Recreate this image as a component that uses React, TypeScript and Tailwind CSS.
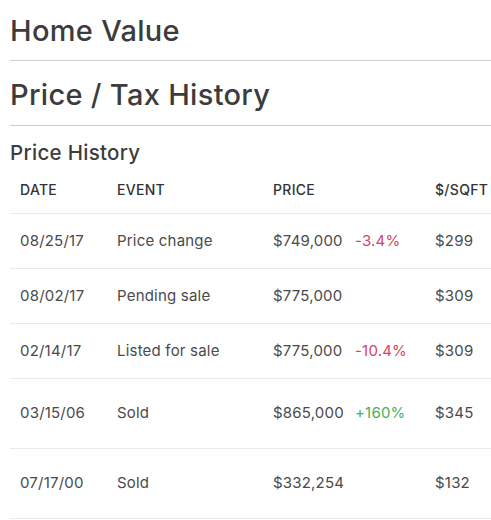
const rows = [
  { date: '08/25/17', event: 'Price change', price: '$749,000', change: '-3.4%', up: false, sqft: '$299', tall: false },
  { date: '08/02/17', event: 'Pending sale', price: '$775,000', change: '', up: false, sqft: '$309', tall: false },
  { date: '02/14/17', event: 'Listed for sale', price: '$775,000', change: '-10.4%', up: false, sqft: '$309', tall: false },
  { date: '03/15/06', event: 'Sold', price: '$865,000', change: '+160%', up: true, sqft: '$345', tall: true },
  { date: '07/17/00', event: 'Sold', price: '$332,254', change: '', up: false, sqft: '$132', tall: true },
];

const cols = 'grid grid-cols-[97px_156px_82px_80px_1fr] items-center pl-[10px]';

export default function App() {
  return (
    <div className="min-h-screen bg-white pl-[10px] text-[#444]" style={{ fontFamily: 'Inter, sans-serif' }}>
      <h2 className="h-[61px] flex items-center border-b border-[#cfcfcf] text-[29px] tracking-[0.3px] text-[#3c3c3c] font-medium pt-[2px]">
        Home Value
      </h2>
      <h2 className="h-[65px] flex items-center border-b border-[#cfcfcf] text-[29px] tracking-[0.3px] text-[#3c3c3c] font-medium pt-[4px]">
        Price / Tax History
      </h2>
      <h3 className="pt-[14px] text-[20.5px] tracking-[0.3px] font-medium text-[#3c3c3c] leading-[26px]">Price History</h3>

      {/* header */}
      <div className={`${cols} h-[48px] !items-end pb-[14px] border-b border-[#ebebeb] text-[14px] tracking-[0.3px] leading-[18px] font-medium text-[#333]`}>
        <span>DATE</span>
        <span>EVENT</span>
        <span>PRICE</span>
        <span />
        <span>$/SQFT</span>
      </div>

      {rows.map((r, i) => (
        <div
          key={i}
          className={`${cols} ${r.tall ? 'h-[70px]' : 'h-[55px]'} border-b border-[#ebebeb] text-[15px] tracking-[0.2px] text-[#4a4a4a]`}
        >
          <span>{r.date}</span>
          <span>{r.event}</span>
          <span>{r.price}</span>
          <span className={r.up ? 'text-[#45b05a]' : 'text-[#d6455f]'}>{r.change}</span>
          <span>{r.sqft}</span>
        </div>
      ))}
    </div>
  );
}
